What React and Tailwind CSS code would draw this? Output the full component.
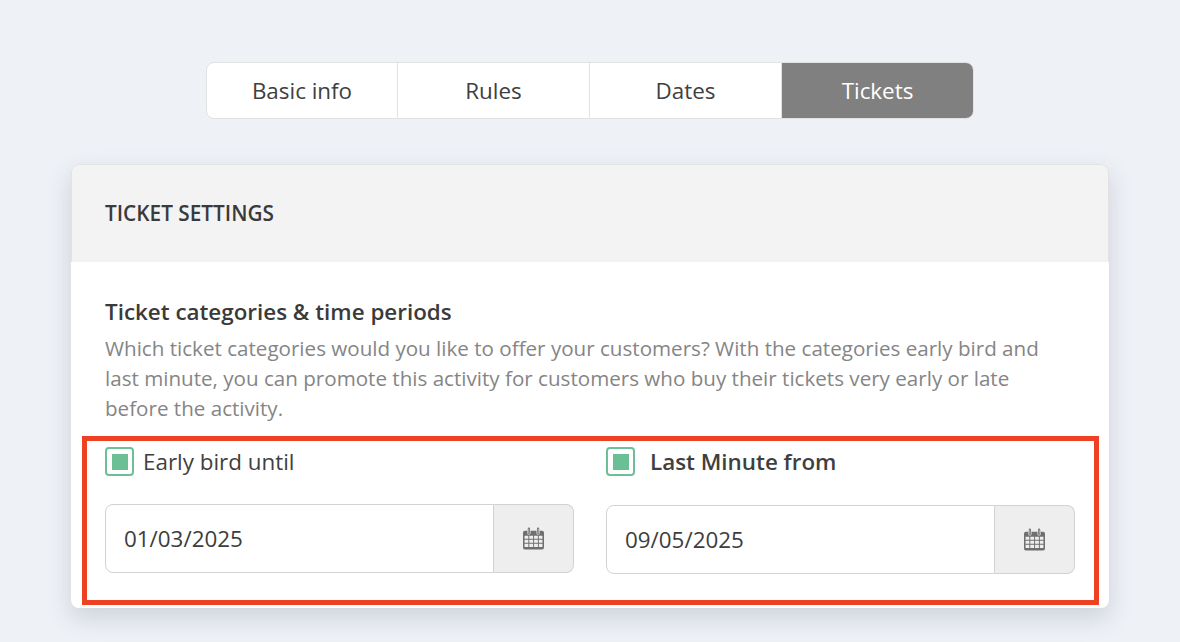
const tabs = [
  { label: "Basic info", width: "w-[191px]" },
  { label: "Rules", width: "w-[192px]" },
  { label: "Dates", width: "w-[192px]" },
  { label: "Tickets", width: "flex-1" },
];

const CalendarIcon = () => (
  <svg width="21" height="23" viewBox="0 0 22 24" className="block">
    <path
      fill="#6f6f6f"
      fillRule="evenodd"
      d="M2 4h2.5v2.2a1.7 1.7 0 0 0 3.4 0V4h6.2v2.2a1.7 1.7 0 0 0 3.4 0V4H20a2 2 0 0 1 2 2v15.5a2 2 0 0 1-2 2H2a2 2 0 0 1-2-2V6a2 2 0 0 1 2-2ZM1.6 9v3.2h4V9h-4Zm5 0v3.2h4V9h-4Zm5 0v3.2h4V9h-4Zm5 0v3.2h3.8V9h-3.8Zm-15 4.2v3.2h4v-3.2h-4Zm5 0v3.2h4v-3.2h-4Zm5 0v3.2h4v-3.2h-4Zm5 0v3.2h3.8v-3.2h-3.8Zm-15 4.2v3.6h4v-3.6h-4Zm5 0v3.6h4v-3.6h-4Zm5 0v3.6h4v-3.6h-4Zm5 0v3.6h3.8v-3.6h-3.8Z"
    />
    <path fill="#6f6f6f" fillRule="evenodd" d="M6.2 0.5a1.2 1.2 0 0 1 1.2 1.2v4.4a1.2 1.2 0 0 1-2.4 0V1.7a1.2 1.2 0 0 1 1.2-1.2Zm0 1a.3.3 0 0 0-.3.3v4.2a.3.3 0 0 0 .6 0V1.8a.3.3 0 0 0-.3-.3ZM15.8 0.5A1.2 1.2 0 0 1 17 1.7v4.4a1.2 1.2 0 0 1-2.4 0V1.7a1.2 1.2 0 0 1 1.2-1.2Zm0 1a.3.3 0 0 0-.3.3v4.2a.3.3 0 0 0 .6 0V1.8a.3.3 0 0 0-.3-.3Z" />
  </svg>
);

const Checkbox = () => (
  <span className="flex h-[29px] w-[29px] shrink-0 items-center justify-center rounded-[4px] border-[2px] border-[#6dbf95] bg-white">
    <span className="block h-[16px] w-[16px] bg-[#6abf94]" />
  </span>
);

const DateInput = ({ value, className }) => (
  <div className={`flex h-[69px] w-full ${className}`}>
    <div className="flex flex-1 items-center rounded-l-[8px] border border-[#d2d2d2] bg-white pt-[2px] pl-[18px] text-[22.4px] text-[#3d3d3d]">
      {value}
    </div>
    <div className="flex w-[80px] items-center justify-center rounded-r-[8px] border border-l-0 border-[#d2d2d2] bg-[#eeeeee]">
      <CalendarIcon />
    </div>
  </div>
);

export default function App() {
  return (
    <div className="h-[642px] w-[1180px] overflow-hidden bg-[#eef1f6] pt-[62px] font-['Open_Sans',sans-serif]">
      <div className="mx-auto flex h-[57px] w-[768px] overflow-hidden rounded-[8px] border border-[#e2e2e2] bg-white">
        {tabs.map((tab) => (
          <div
            key={tab.label}
            className={`flex items-center justify-center border-r border-[#e2e2e2] text-[22.4px] last:border-r-0 ${tab.width} ${
              tab.label === "Tickets" ? "bg-[#808080] text-white" : "text-[#404040]"
            }`}
          >
            {tab.label}
          </div>
        ))}
      </div>

      <div className="relative mx-auto mt-[45px] w-[1038px] rounded-[8px] bg-white shadow-[0_10px_24px_rgba(60,70,90,0.18)]">
        <div className="flex h-[98px] items-center rounded-t-[8px] border-x border-t border-[#e2e2e2] bg-[#f4f3f3] pl-[33px] text-[20.8px] font-semibold text-[#3a3a3a]">
          TICKET SETTINGS
        </div>
        <div className="px-[34px] pt-[33px] pb-[34px]">
          <h2 className="text-[22.4px] leading-[34px] font-semibold text-[#3a3a3a]">
            Ticket categories &amp; time periods
          </h2>
          <p className="mt-[4px] w-[960px] text-[20.6px] leading-[30px] text-[#858585]">
            Which ticket categories would you like to offer your customers? With the categories early bird and last minute, you can promote this activity for customers who buy their tickets very early or late before the activity.
          </p>
          <div className="mt-[22px] grid grid-cols-2 gap-x-[32px]">
            <div>
              <label className="flex items-center gap-[9px] text-[22.4px] text-[#3f3f3f]">
                <Checkbox />
                Early bird until
              </label>
              <DateInput value="01/03/2025" className="mt-[25px]" />
            </div>
            <div>
              <label className="flex items-center gap-[15px] text-[22.4px] font-semibold text-[#3f3f3f]">
                <Checkbox />
                Last Minute from
              </label>
              <DateInput value="09/05/2025" className="mt-[26px]" />
            </div>
          </div>
        </div>
        <div className="absolute top-[272px] left-[11px] h-[169px] w-[1017px] border-[5px] border-[#ee4023]" />
      </div>
    </div>
  );
}
